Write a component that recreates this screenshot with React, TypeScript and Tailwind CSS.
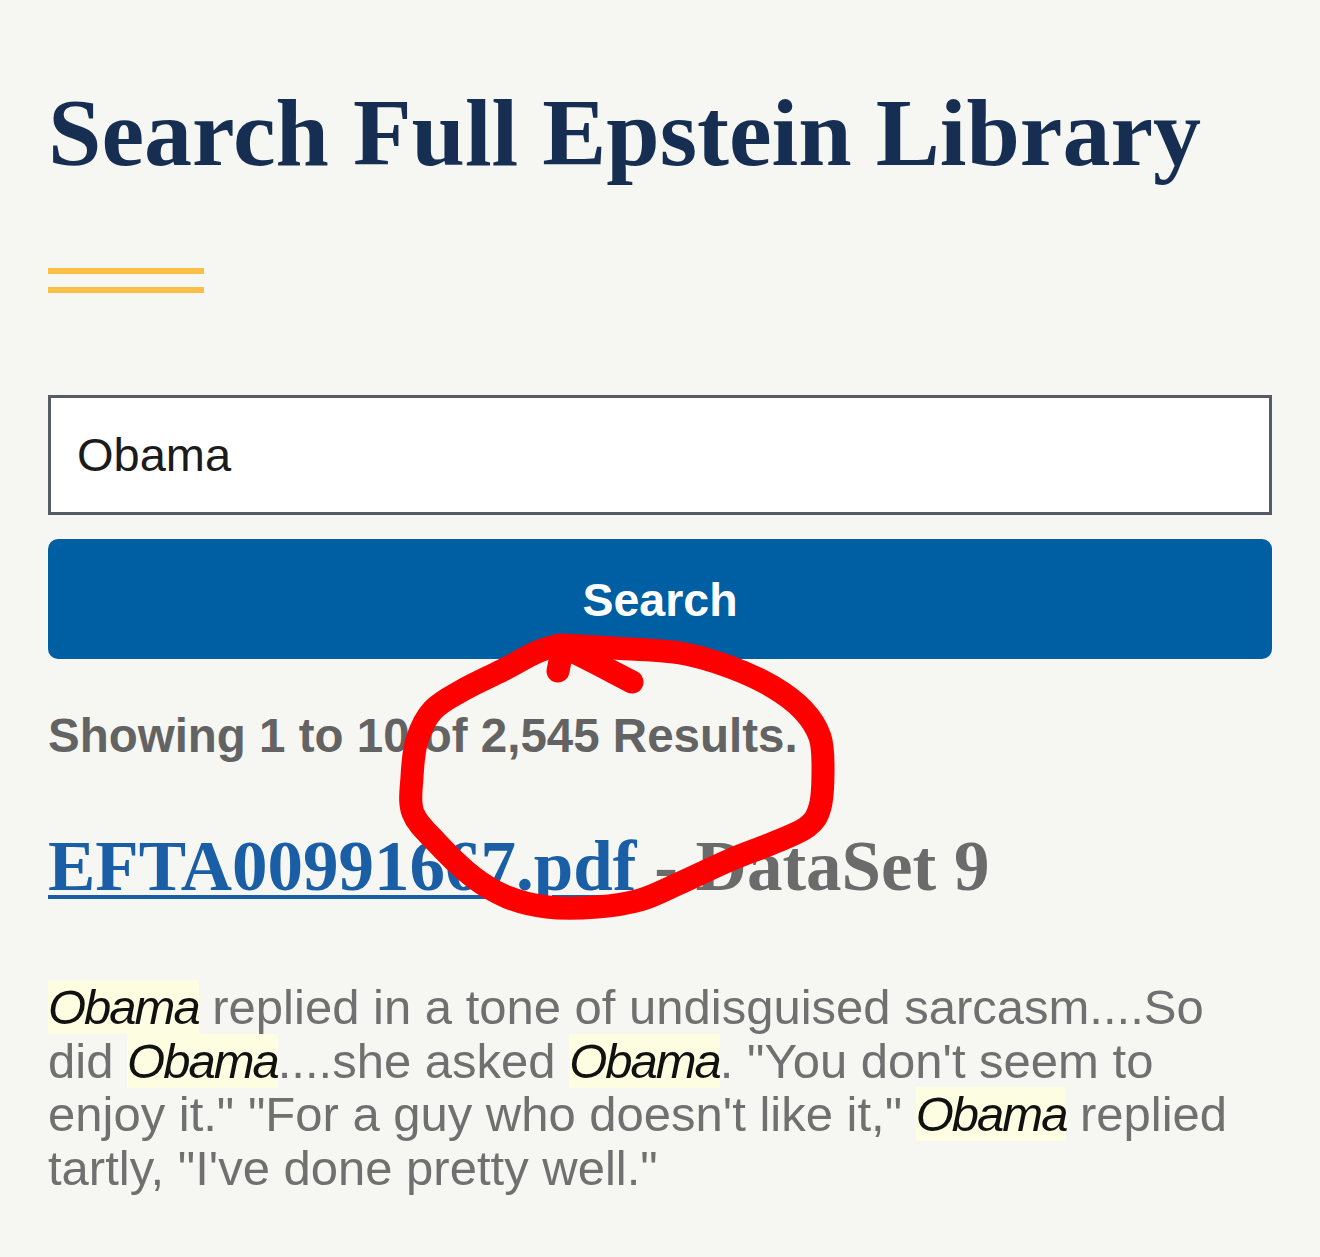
import React from "react";

type P = [number, number];

function catmull(points: P[]): string {
  let d = `M ${points[0][0]} ${points[0][1]}`;
  for (let i = 0; i < points.length - 1; i++) {
    const p0 = points[i - 1] || points[i];
    const p1 = points[i];
    const p2 = points[i + 1];
    const p3 = points[i + 2] || p2;
    const c1x = p1[0] + (p2[0] - p0[0]) / 6;
    const c1y = p1[1] + (p2[1] - p0[1]) / 6;
    const c2x = p2[0] - (p3[0] - p1[0]) / 6;
    const c2y = p2[1] - (p3[1] - p1[1]) / 6;
    d += ` C ${c1x.toFixed(1)} ${c1y.toFixed(1)} ${c2x.toFixed(1)} ${c2y.toFixed(1)} ${p2[0]} ${p2[1]}`;
  }
  return d;
}

const circlePts: P[] = [
  [562, 645],
  [613, 648],
  [680, 653],
  [730, 667],
  [773, 687],
  [803, 710],
  [820, 737],
  [823, 770],
  [820, 807],
  [807, 827],
  [773, 843],
  [730, 860],
  [680, 883],
  [640, 900],
  [597, 907],
  [547, 907],
  [507, 897],
  [473, 877],
  [437, 843],
  [413, 813],
  [412, 777],
  [417, 740],
  [433, 710],
  [463, 690],
  [503, 670],
  [537, 652],
  [560, 645],
];

function RedCircle() {
  return (
    <svg
      className="pointer-events-none absolute left-0 top-0"
      width={1320}
      height={1257}
      viewBox="0 0 1320 1257"
    >
      <g
        fill="none"
        stroke="#ff0000"
        strokeWidth={23}
        strokeLinecap="round"
        strokeLinejoin="round"
      >
        <path d="M 558 671 L 563 646" />
        <path d={catmull(circlePts)} />
        <path d="M 566 648 Q 600 665 632 682" />
      </g>
    </svg>
  );
}

function Hl({ children }: { children: React.ReactNode }) {
  return (
    <span className="bg-[#fdfde2] italic tracking-[-2px] text-[#111111]">
      {children}
    </span>
  );
}

export default function App() {
  return (
    <div className="relative min-h-[1257px] w-[1320px] overflow-hidden bg-[#f6f6f2] px-[48px]">
      <h1
        className="pt-[76px] text-[96px] font-bold leading-[114px] text-[#162e51]"
        style={{ fontFamily: '"Liberation Serif", serif' }}
      >
        Search Full Epstein Library
      </h1>

      <div className="mt-[78px] flex w-[156px] flex-col gap-[13px]">
        <div className="h-[6px] bg-[#fbbf47]" />
        <div className="h-[6px] bg-[#fbbf47]" />
      </div>

      <div
        className="mt-[102px] flex h-[120px] items-center border-[3px] border-[#565c65] bg-white pl-[26px] text-[47px] text-[#1b1b1b]"
        style={{ fontFamily: '"Liberation Sans", Arial, sans-serif' }}
      >
        Obama
      </div>

      <div
        className="mt-[24px] flex h-[120px] items-center justify-center rounded-[10px] bg-[#005ea2] pt-[3px] text-[46.5px] font-bold text-white"
        style={{ fontFamily: '"Liberation Sans", Arial, sans-serif' }}
      >
        Search
      </div>

      <p
        className="mt-[49px] whitespace-nowrap text-[47.5px] font-bold leading-[56px] text-[#636363]"
        style={{ fontFamily: '"Liberation Sans", Arial, sans-serif' }}
      >
        Showing 1 to 10 of 2,545 Results.
      </p>

      <h3
        className="mt-[62px] whitespace-nowrap text-[71px] font-bold leading-[80px] text-[#6b6b6b]"
        style={{ fontFamily: '"Liberation Serif", serif' }}
      >
        <a
          href="#"
          className="text-[#1a5fa6] underline decoration-[4px] underline-offset-[5px]"
        >
          EFTA00991667.pdf
        </a>{" "}
        - DataSet 9
      </h3>

      <div
        className="mt-[75px] text-[49px] leading-[53.5px] text-[#707070]"
        style={{ fontFamily: '"Liberation Sans", Arial, sans-serif' }}
      >
        <div className="whitespace-nowrap">
          <Hl>Obama</Hl> replied in a tone of undisguised sarcasm....So
        </div>
        <div className="whitespace-nowrap">
          did <Hl>Obama</Hl>....she asked <Hl>Obama</Hl>. "You don't seem to
        </div>
        <div className="whitespace-nowrap">
          enjoy it." "For a guy who doesn't like it," <Hl>Obama</Hl> replied
        </div>
        <div className="whitespace-nowrap">tartly, "I've done pretty well."</div>
      </div>

      <RedCircle />
    </div>
  );
}
